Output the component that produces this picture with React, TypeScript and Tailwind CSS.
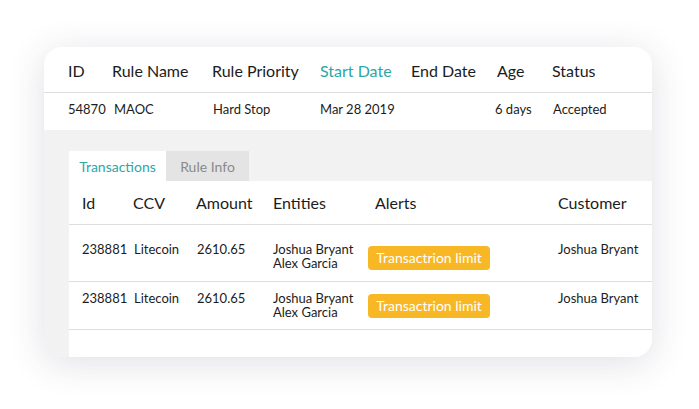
const ruleCols = "grid grid-cols-[44px_100px_108px_91px_86px_55px_1fr]";
const txCols = "grid grid-cols-[51px_63px_77px_95px_190px_1fr]";

const txRows = [
  { id: "238881", ccv: "Litecoin", amount: "2610.65", entities: ["Joshua Bryant", "Alex Garcia"], alert: "Transactrion limit", customer: "Joshua Bryant", h: "h-[57px] pt-[17px]", badge: "mt-[4px]" },
  { id: "238881", ccv: "Litecoin", amount: "2610.65", entities: ["Joshua Bryant", "Alex Garcia"], alert: "Transactrion limit", customer: "Joshua Bryant", h: "h-[48px] pt-[9px]", badge: "mt-[3px]" },
];

function RuleHeader() {
  return (
    <div className={`${ruleCols} h-[46px] items-center border-b border-[#dedede] pl-6 pt-[2px] text-[16px] text-[#1c1c1c]`}>
      <span>ID</span>
      <span>Rule Name</span>
      <span>Rule Priority</span>
      <span className="text-[#2ba7a7]">Start Date</span>
      <span>End Date</span>
      <span>Age</span>
      <span>Status</span>
    </div>
  );
}

function RuleRow() {
  return (
    <div className={`${ruleCols} h-[37px] items-center pb-[4px] pl-6 text-[13px] text-[#1c1c1c]`}>
      <span>54870</span>
      <span className="pl-[2px]">MAOC</span>
      <span className="pl-[1px]">Hard Stop</span>
      <span>Mar 28 2019</span>
      <span></span>
      <span className="-ml-[2px]">6 days</span>
      <span className="pl-[1px]">Accepted</span>
    </div>
  );
}

function Tabs() {
  return (
    <div className="flex h-[30px] text-[14px]">
      <div className="flex w-[97px] items-center justify-center bg-white text-[#2ba7a7]">Transactions</div>
      <div className="flex w-[83px] items-center justify-center bg-[#e4e4e4] text-[#8a8a8a]">Rule Info</div>
    </div>
  );
}

function TransactionsTable() {
  return (
    <div className="flex-1 bg-white">
      <div className={`${txCols} h-[44px] items-center border-b border-[#dedede] pl-[13px] text-[16px] text-[#1c1c1c]`}>
        <span>Id</span>
        <span>CCV</span>
        <span>Amount</span>
        <span>Entities</span>
        <span className="pl-[7px]">Alerts</span>
        <span>Customer</span>
      </div>
      {txRows.map((r, i) => (
        <div key={i} className={`${txCols} ${r.h} items-start border-b border-[#dedede] pl-[13px] text-[13px] leading-[14px] text-[#1c1c1c]`}>
          <span>{r.id}</span>
          <span className="pl-[1px]">{r.ccv}</span>
          <span className="pl-[1px]">{r.amount}</span>
          <span className="flex flex-col">
            {r.entities.map((e) => (
              <span key={e}>{e}</span>
            ))}
          </span>
          <span className={r.badge}>
            <span className="inline-flex h-[24px] w-[122px] items-center justify-center rounded-[4px] bg-[#f8b724] text-[14px] text-white">
              {r.alert}
            </span>
          </span>
          <span>{r.customer}</span>
        </div>
      ))}
    </div>
  );
}

export default function App() {
  return (
    <div className="h-[409px] w-[699px] bg-white pl-[44px] pt-[47px] font-['Lato',sans-serif]">
      <div className="flex h-[310px] w-[608px] flex-col overflow-hidden rounded-[18px] bg-white shadow-[0_6px_36px_rgba(60,50,80,0.16)]">
        <RuleHeader />
        <RuleRow />
        <div className="flex flex-1 flex-col bg-[#f2f2f2] pl-[25px] pt-[21px]">
          <Tabs />
          <TransactionsTable />
        </div>
      </div>
    </div>
  );
}
